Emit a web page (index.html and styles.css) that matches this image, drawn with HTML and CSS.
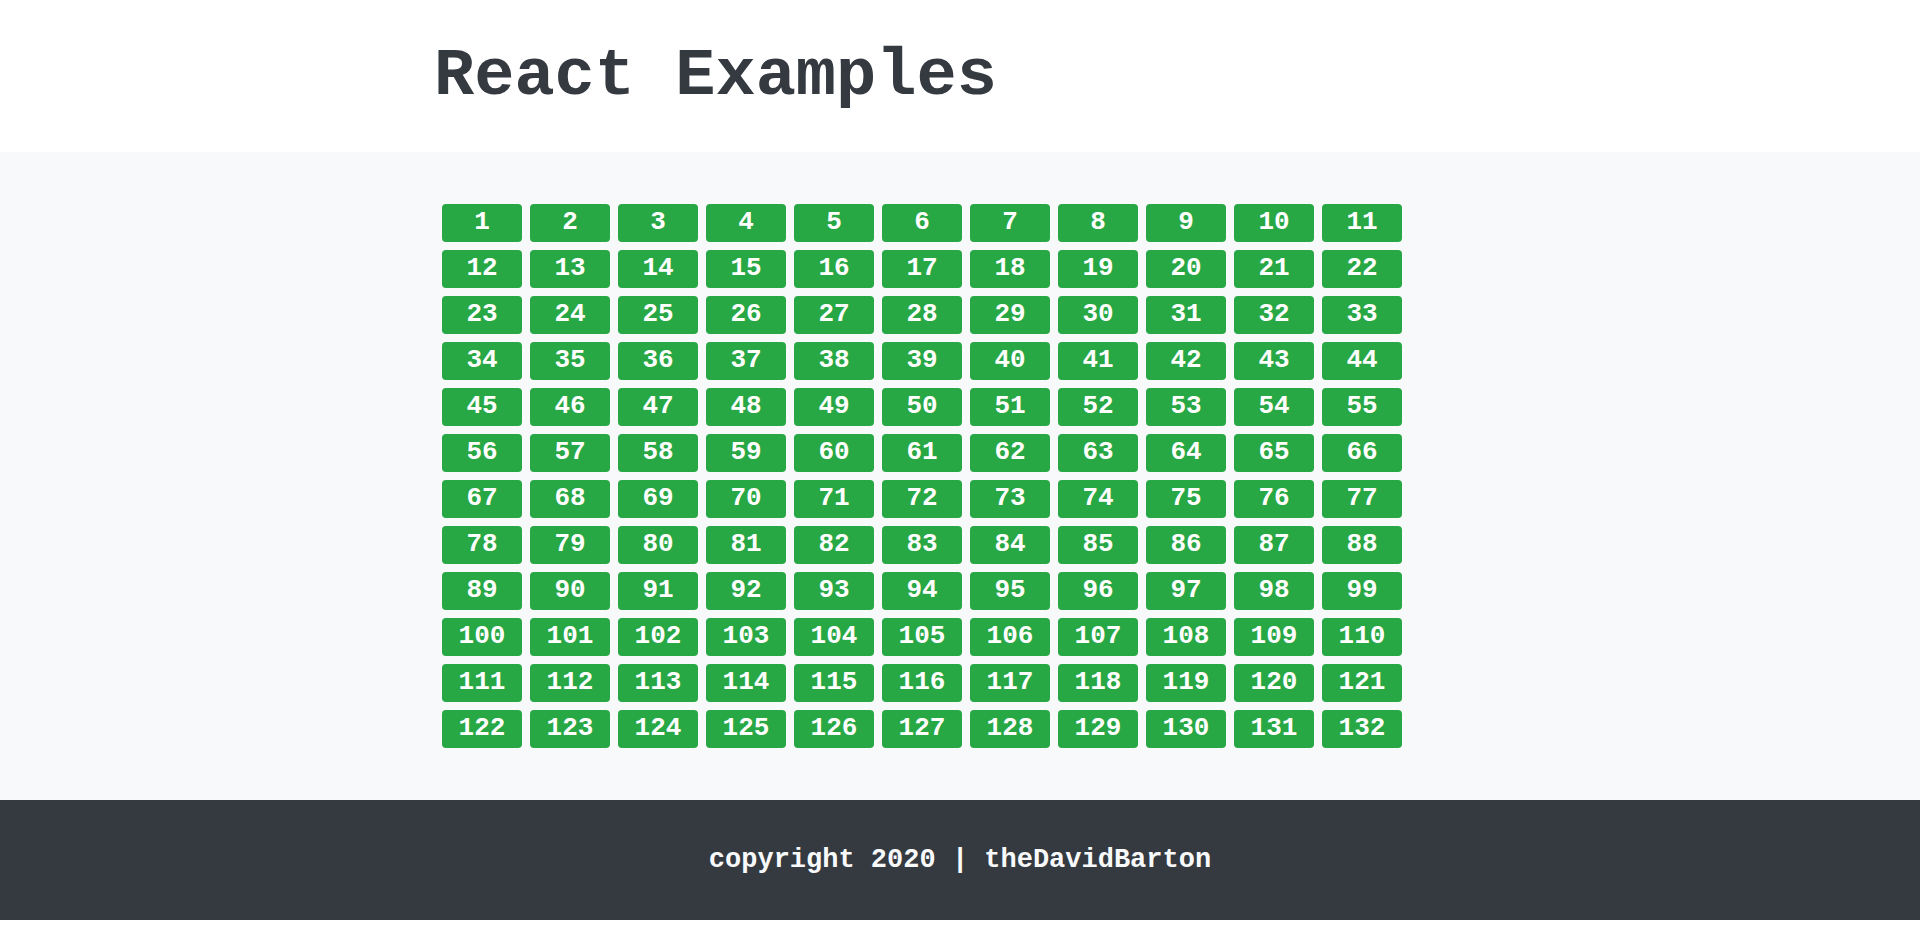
FILE: index.html
```html
<!DOCTYPE html>
<html lang="en">
<head>
  <meta charset="utf-8">
  <meta name="viewport" content="width=device-width, initial-scale=1">
  <title>React Examples</title>
  <link rel="stylesheet" href="styles.css">
</head>
<body>
  <header class="site-header">
    <div class="container">
      <h1 class="title">React Examples</h1>
    </div>
  </header>
  <main class="examples">
    <div class="container example-list" id="examples"></div>
  </main>
  <footer class="site-footer">
    <p class="copyright">copyright 2020 | theDavidBarton</p>
  </footer>
  <script src="app.js"></script>
</body>
</html>
```

FILE: styles.css
```css
*,
*::before,
*::after {
  box-sizing: border-box;
}

body {
  margin: 0;
  background: #fff;
  color: #343a40;
  font-family: "Liberation Mono", "Courier New", monospace;
  font-weight: 700;
}

.container {
  max-width: 1140px;
  margin: 0 auto;
  padding: 0 44px;
}

.site-header {
  padding: 48px 0;
}

.title {
  margin: 0;
  font-size: 67px;
  line-height: 56px;
}

.examples {
  padding: 52px 0;
  background: #f8f9fb;
}

.example-list {
  display: flex;
  flex-wrap: wrap;
  gap: 8px;
  padding: 0 52px;
}

.example {
  width: 80px;
  height: 38px;
  padding: 0 0 2px;
  border: 0;
  border-radius: 4px;
  background: #28a745;
  color: #fff;
  font: inherit;
  font-size: 26px;
  line-height: 24px;
  cursor: pointer;
}

.example:hover {
  background: #218838;
}

.site-footer {
  padding: 48px 16px;
  background: #343a40;
  color: #f8f9fa;
  text-align: center;
}

.copyright {
  margin: 0;
  font-size: 27px;
  line-height: 24px;
}
```

FILE: app.js
```js
const EXAMPLE_COUNT = 132;
const list = document.getElementById('examples');

for (let id = 1; id <= EXAMPLE_COUNT; id += 1) {
  const button = document.createElement('button');
  button.type = 'button';
  button.className = 'example';
  button.textContent = id;
  list.append(button);
}
```
